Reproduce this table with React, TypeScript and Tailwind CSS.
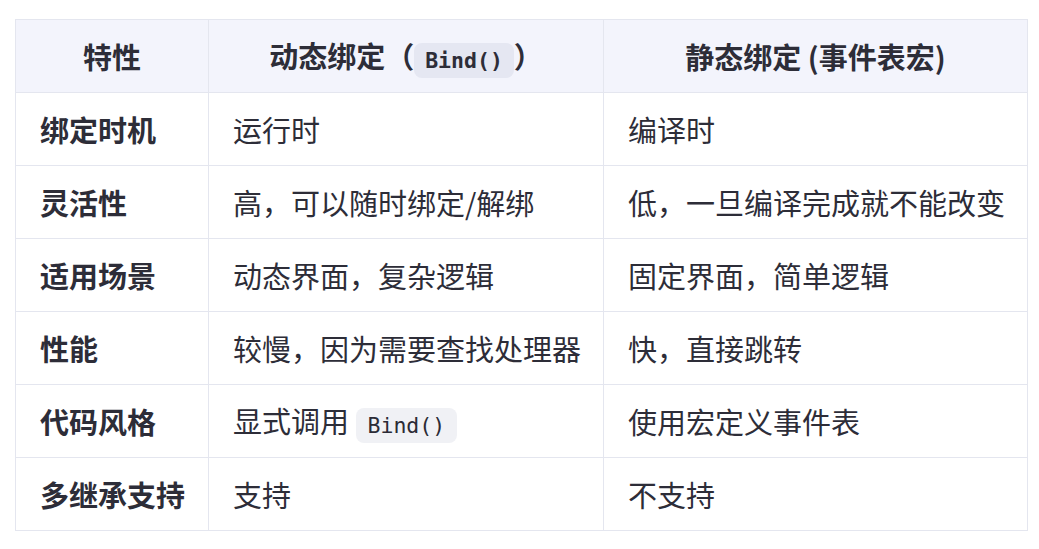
const rows: { feature: string; dynamic: React.ReactNode; staticText: string }[] = [
  { feature: '绑定时机', dynamic: '运行时', staticText: '编译时' },
  { feature: '灵活性', dynamic: '高，可以随时绑定/解绑', staticText: '低，一旦编译完成就不能改变' },
  { feature: '适用场景', dynamic: '动态界面，复杂逻辑', staticText: '固定界面，简单逻辑' },
  { feature: '性能', dynamic: '较慢，因为需要查找处理器', staticText: '快，直接跳转' },
  {
    feature: '代码风格',
    dynamic: (
      <>
        显式调用{' '}
        <code className="rounded-lg bg-[#f0f1f5] px-[12px] py-[5px] font-['DejaVu_Sans_Mono',monospace] text-[21.5px] text-[#2b2b36]">
          Bind()
        </code>
      </>
    ),
    staticText: '使用宏定义事件表',
  },
  { feature: '多继承支持', dynamic: '支持', staticText: '不支持' },
];

export default function App() {
  return (
    <div className="min-h-screen bg-white pl-[15px] pt-[19px] font-['Noto_Sans_CJK_SC',sans-serif] text-[#2d2d38]">
      <table className="w-[1012px] table-fixed border-collapse text-[29px] leading-none">
        <colgroup>
          <col className="w-[193px]" />
          <col className="w-[395px]" />
          <col className="w-[424px]" />
        </colgroup>
        <thead>
          <tr className="h-[73px] bg-[#f3f4fc]">
            <th className="border border-[#e4e6ef] text-center font-bold">特性</th>
            <th className="border border-[#e4e6ef] text-center font-bold whitespace-nowrap">
              动态绑定（
              <code className="rounded-lg bg-[#e5e7f2] px-[11px] py-[5px] font-['DejaVu_Sans_Mono',monospace] text-[21.5px] font-bold">
                Bind()
              </code>
              ）
            </th>
            <th className="border border-[#e4e6ef] text-center font-bold whitespace-nowrap">静态绑定 (事件表宏)</th>
          </tr>
        </thead>
        <tbody>
          {rows.map((row) => (
            <tr key={row.feature} className="h-[73px]">
              <td className="border border-[#e4e6ef] px-6 font-bold whitespace-nowrap">{row.feature}</td>
              <td className="border border-[#e4e6ef] px-6 whitespace-nowrap">{row.dynamic}</td>
              <td className="border border-[#e4e6ef] px-6 whitespace-nowrap">{row.staticText}</td>
            </tr>
          ))}
        </tbody>
      </table>
    </div>
  );
}
